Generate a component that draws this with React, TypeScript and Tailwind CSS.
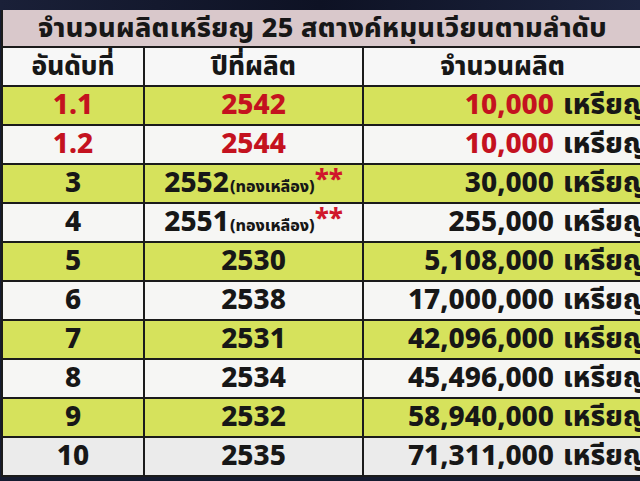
const rows = [
  { rank: "1.1", year: "2542", amount: "10,000", red: true, bg: "bg-[#d6e25c]" },
  { rank: "1.2", year: "2544", amount: "10,000", red: true, bg: "bg-[#f6f6f4]" },
  { rank: "3", year: "2552", amount: "30,000", note: true, bg: "bg-[#d6e25c]" },
  { rank: "4", year: "2551", amount: "255,000", note: true, bg: "bg-[#f6f6f4]" },
  { rank: "5", year: "2530", amount: "5,108,000", bg: "bg-[#d6e25c]" },
  { rank: "6", year: "2538", amount: "17,000,000", bg: "bg-[#f6f6f4]" },
  { rank: "7", year: "2531", amount: "42,096,000", bg: "bg-[#d6e25c]" },
  { rank: "8", year: "2534", amount: "45,496,000", bg: "bg-[#f6f6f4]" },
  { rank: "9", year: "2532", amount: "58,940,000", bg: "bg-[#d6e25c]" },
  { rank: "10", year: "2535", amount: "71,311,000", bg: "bg-[#ebebeb]" },
];

const font = { fontFamily: '"Noto Sans Thai", Tahoma, "DejaVu Sans", "Noto Sans", sans-serif' };

export default function App() {
  return (
    <div className="w-[640px] h-[481px] overflow-hidden bg-[#151b30]" style={font}>
      <div className="h-[10px] bg-gradient-to-r from-[#1a2038] via-[#0e1224] to-[#1c2440]" />
      <div className="w-[700px] ml-[1px] border-l-2 border-[#1b1b1b] font-extrabold text-[#171717]">
        <div className="h-[38px] w-[639px] bg-[#d9c8cb] border-b-2 border-[#1b1b1b] flex items-center justify-center text-[27px] leading-none tracking-[0.3px]">
          จำนวนผลิตเหรียญ 25 สตางค์หมุนเวียนตามลำดับ
        </div>
        <div className="grid grid-cols-[142px_219px_1fr] h-[39px] bg-[#f7f7f7] border-b-2 border-[#1b1b1b] text-[26px] leading-none">
          <div className="flex items-center justify-center border-r-2 border-[#1b1b1b]">อันดับที่</div>
          <div className="flex items-center justify-center border-r-2 border-[#1b1b1b]">ปีที่ผลิต</div>
          <div className="flex items-center justify-center w-[277px]">จำนวนผลิต</div>
        </div>
        {rows.map((r) => (
          <div
            key={r.rank}
            className={`grid grid-cols-[142px_219px_1fr] h-[39px] border-b-2 border-[#1b1b1b] text-[28px] leading-none ${r.bg}`}
          >
            <div
              className={`flex items-center justify-center border-r-2 border-[#1b1b1b] ${r.red ? "text-[#c4121f]" : ""}`}
            >
              {r.rank}
            </div>
            <div
              className={`flex items-center justify-center border-r-2 border-[#1b1b1b] ${r.red ? "text-[#c4121f]" : ""}`}
            >
              {r.note ? (
                <span className="flex items-end">
                  {r.year}
                  <span className="text-[16px] mb-[3px] ml-[1px]">(ทองเหลือง)</span>
                  <span className="text-[#d0182c] text-[26px] self-start -mt-[3px]">**</span>
                </span>
              ) : (
                r.year
              )}
            </div>
            <div className="flex items-center whitespace-nowrap">
              <span className={`w-[190px] text-right ${r.red ? "text-[#c4121f]" : ""}`}>{r.amount}</span>
              <span className="ml-[9px]">เหรียญ</span>
            </div>
          </div>
        ))}
      </div>
    </div>
  );
}
